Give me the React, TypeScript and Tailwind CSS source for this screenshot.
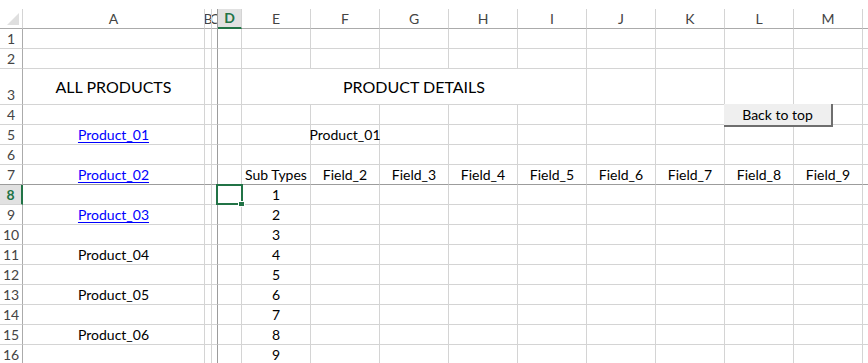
import React from 'react';

type Col = { id: string; w: string };

const COLS: Col[] = [
  { id: 'A', w: 'w-[182px]' },
  { id: 'B', w: 'w-[7px]' },
  { id: 'C', w: 'w-[6px]' },
  { id: 'D', w: 'w-[24px]' },
  { id: 'E', w: 'w-[69px]' },
  { id: 'F', w: 'w-[69px]' },
  { id: 'G', w: 'w-[69px]' },
  { id: 'H', w: 'w-[69px]' },
  { id: 'I', w: 'w-[69px]' },
  { id: 'J', w: 'w-[69px]' },
  { id: 'K', w: 'w-[69px]' },
  { id: 'L', w: 'w-[69px]' },
  { id: 'M', w: 'w-[69px]' },
  { id: '', w: 'w-[69px]' },
];

const ROWS = Array.from({ length: 16 }, (_, i) => i + 1);

// products listed in column A; the first three are hyperlinks
const PRODUCTS: Record<number, { name: string; link: boolean }> = {
  5: { name: 'Product_01', link: true },
  7: { name: 'Product_02', link: true },
  9: { name: 'Product_03', link: true },
  11: { name: 'Product_04', link: false },
  13: { name: 'Product_05', link: false },
  15: { name: 'Product_06', link: false },
};

const FIELDS = ['Field_2', 'Field_3', 'Field_4', 'Field_5', 'Field_6', 'Field_7', 'Field_8', 'Field_9'];

function cellValue(row: number, col: string): React.ReactNode {
  if (col === 'A' && PRODUCTS[row]) {
    const p = PRODUCTS[row];
    return p.link ? <span className="text-[#0000ff] underline underline-offset-[2px]">{p.name}</span> : p.name;
  }
  if (row === 5 && col === 'F') return 'Product_01';
  if (row === 7) {
    if (col === 'E') return 'Sub Types';
    const idx = 'FGHIJKLM'.indexOf(col);
    if (col && idx >= 0) return FIELDS[idx];
  }
  if (row >= 8 && col === 'E') return String(row - 7);
  return null;
}

const HeaderRow: React.FC = () => (
  <div className="flex h-[20px]">
    <div className="relative w-[23px] shrink-0 border-r border-b border-r-[#d4d4d4] border-b-[#ababab]">
      <svg className="absolute right-[3px] bottom-[3px]" width="12" height="12" viewBox="0 0 12 12">
        <polygon points="12,0 12,12 0,12" fill="#dfdfdf" />
      </svg>
    </div>
    {COLS.map((c, i) => {
      const active = c.id === 'D';
      return (
        <div
          key={i}
          className={`${c.w} shrink-0 overflow-hidden flex items-center justify-center border-r border-b leading-[18px] text-[14px] ${
            c.id === 'C' ? 'border-r-[#9c9c9c]' : 'border-r-[#d4d4d4]'
          } ${active ? 'bg-[#e1e1e1] border-b-2 border-b-[#217346] font-bold text-[#217346]' : 'border-b-[#ababab] text-[#444]'}`}
        >
          {c.id}
        </div>
      );
    })}
  </div>
);

const Row: React.FC<{ n: number }> = ({ n }) => {
  const tall = n === 3;
  const active = n === 8;
  const bottom = n === 7 ? 'border-b-[#9c9c9c]' : 'border-b-[#d4d4d4]';

  return (
    <div className={`flex ${tall ? 'h-[36px]' : 'h-[20px]'}`}>
      <div
        className={`w-[23px] shrink-0 flex items-end justify-center border-b leading-[19px] text-[14px] ${bottom} ${
          active
            ? 'bg-[#e1e1e1] border-r-2 border-r-[#217346] font-bold text-[#217346]'
            : 'border-r border-r-[#ababab] text-[#444]'
        }`}
      >
        {n}
      </div>
      {tall ? (
        <>
          <div className="w-[182px] shrink-0 flex items-center justify-center border-r border-b border-[#d4d4d4] text-[16px] leading-none whitespace-nowrap">
            ALL PRODUCTS
          </div>
          <div className="w-[7px] shrink-0 border-r border-b border-[#d4d4d4]" />
          <div className="w-[6px] shrink-0 border-r border-b border-[#d4d4d4] border-r-[#9c9c9c]" />
          <div className="w-[24px] shrink-0 border-r border-b border-[#d4d4d4]" />
          <div className="w-[345px] shrink-0 flex items-center justify-center border-r border-b border-[#d4d4d4] text-[16px] leading-none whitespace-nowrap">
            PRODUCT DETAILS
          </div>
          {['J', 'K', 'L', 'M', 'N'].map(id => (
            <div key={id} className="w-[69px] shrink-0 border-r border-b border-[#d4d4d4]" />
          ))}
        </>
      ) : (
        COLS.map((c, i) => (
          <div
            key={i}
            className={`${c.w} shrink-0 flex items-end justify-center border-r border-b whitespace-nowrap leading-[19px] text-[14px] ${bottom} ${
              c.id === 'C' ? 'border-r-[#9c9c9c]' : 'border-r-[#d4d4d4]'
            }`}
          >
            {cellValue(n, c.id)}
          </div>
        ))
      )}
    </div>
  );
};

const App: React.FC = () => {
  return (
    <div className="relative w-[868px] h-[363px] overflow-hidden bg-white font-[Lato,sans-serif] text-black">
      <div className="h-[9px]" />
      <HeaderRow />
      {ROWS.map(n => (
        <Row key={n} n={n} />
      ))}

      {/* form control button floating over L4 */}
      <button className="absolute left-[724px] top-[104px] w-[109px] h-[23px] flex items-center justify-center bg-[#efefef] border-r-2 border-b-2 border-r-[#6e6e6e] border-b-[#6e6e6e] text-[14px] leading-none text-black">
        Back to top
      </button>

      {/* active cell D8 */}
      <div className="absolute left-[216px] top-[184px] w-[27px] h-[21px] border-2 border-[#217346]" />
      <div className="absolute left-[238px] top-[201px] w-[7px] h-[6px] bg-[#217346] border border-white" />
    </div>
  );
};

export default App;
